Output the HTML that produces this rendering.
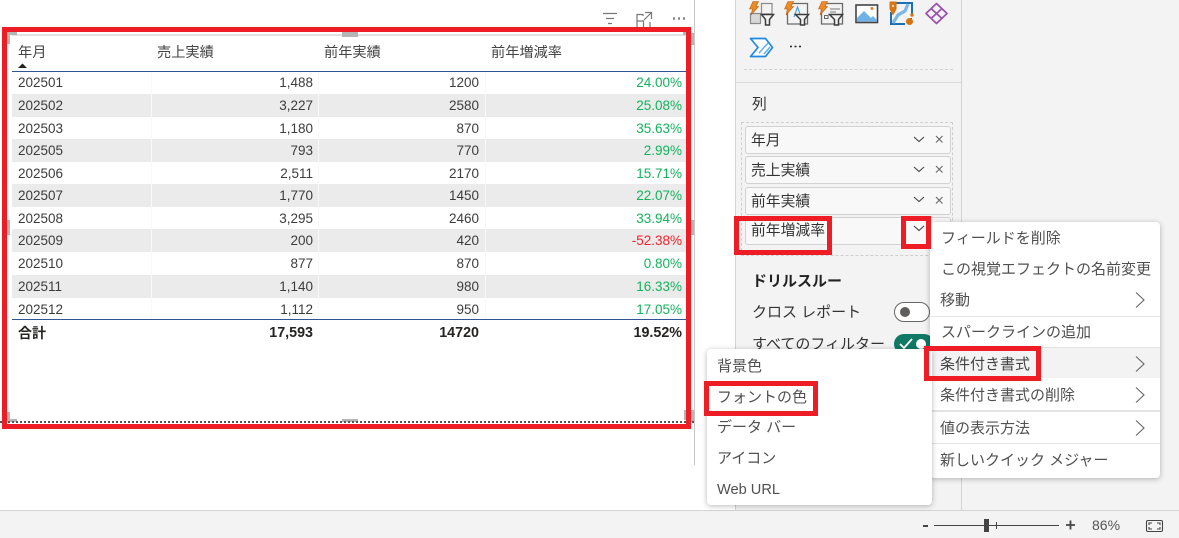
<!DOCTYPE html>
<html lang="ja">
<head>
<meta charset="utf-8">
<style>
html,body{margin:0;padding:0;background:#fff}
#p{position:relative;width:1179px;height:538px;overflow:hidden;background:#fff;font-family:"Liberation Sans","Noto Sans CJK JP",sans-serif;color:#333}
#p div,#p svg{position:absolute}
.t{white-space:nowrap;line-height:20px;height:20px}
.h{font-size:14.2px;color:#444;top:43px}
.d{font-size:13.5px;color:#3c3c3c}
.r{text-align:right;width:80px}
.g{color:#13b35c}
.b{font-weight:bold;color:#252423;font-size:14.3px}
.s{background:#ebebeb;left:12px;width:674px;height:23px}
.f{left:745px;width:204px;height:26px;border:1px solid #d2d2d2;border-radius:3px;background:#f8f8f8}
.fl{left:751px;font-size:14.8px;color:#333}
.m{font-size:15px;color:#505050}
.rb{border:5px solid #ee1c25;box-sizing:border-box}
.sep{left:930px;width:230px;height:1px;background:#e3e3e3}
</style>
</head>
<body>
<div id="p">
  <!-- backgrounds -->
  <div style="left:694px;top:0;width:1px;height:465px;background:#c8c8c8"></div>
  <div style="left:735px;top:0;width:444px;height:510px;background:#f3f3f3"></div>
  <div style="left:735px;top:0;width:1px;height:510px;background:#d4d4d4"></div>
  <div style="left:961px;top:0;width:1px;height:510px;background:#d4d4d4"></div>
  <div style="left:0;top:510px;width:1179px;height:28px;background:#f3f3f3;border-top:1px solid #d4d4d4;box-sizing:border-box"></div>

  <!-- visual toolbar -->
  <svg style="left:600px;top:8px" width="90" height="22" viewBox="0 0 90 22" fill="none" stroke="#777" stroke-width="1.2">
    <path d="M3 5.500H17M6 10.500H14M8 15.500H12"/>
    <path d="M43 8V6.500H37V20H50V14M45 4.500H51.500V11M51.500 4.500L44 12M37 13H43.500V20"/>
    <path d="M73 10.500h2M78 10.500h2M83 10.500h2" stroke-width="2.600" stroke="#888"/>
  </svg>

  <!-- table -->
  <div style="left:12px;top:34px;width:674px;height:2px;background:#e2e2e2"></div>
  <div class="s" style="top:94px"></div>
  <div class="s" style="top:139px"></div>
  <div class="s" style="top:184px"></div>
  <div class="s" style="top:229px"></div>
  <div class="s" style="top:275px"></div>
  <div style="left:151px;top:72px;width:1px;height:247px;background:#f8f8f8"></div>
  <div style="left:318px;top:72px;width:1px;height:247px;background:#f8f8f8"></div>
  <div style="left:485px;top:72px;width:1px;height:247px;background:#f8f8f8"></div>
  <div class="t h" style="left:18px">年月</div>
  <div class="t h" style="left:157px">売上実績</div>
  <div class="t h" style="left:324px">前年実績</div>
  <div class="t h" style="left:491px">前年増減率</div>
  <svg style="left:18px;top:62px" width="10" height="6"><path d="M0 6L4.500 1.500L9 6Z" fill="#222"/></svg>
  <div style="left:12px;top:71px;width:674px;height:1px;background:#2f5597"></div>
  <div style="left:12px;top:319px;width:674px;height:1px;background:#2f5597"></div>

  <div class="t d" style="left:18px;top:73px">202501</div><div class="t d r" style="left:233px;top:73px">1,488</div><div class="t d r" style="left:399px;top:73px">1200</div><div class="t d r g" style="left:602px;top:73px">24.00%</div>
  <div class="t d" style="left:18px;top:96px">202502</div><div class="t d r" style="left:233px;top:96px">3,227</div><div class="t d r" style="left:399px;top:96px">2580</div><div class="t d r g" style="left:602px;top:96px">25.08%</div>
  <div class="t d" style="left:18px;top:119px">202503</div><div class="t d r" style="left:233px;top:119px">1,180</div><div class="t d r" style="left:399px;top:119px">870</div><div class="t d r g" style="left:602px;top:119px">35.63%</div>
  <div class="t d" style="left:18px;top:141px">202505</div><div class="t d r" style="left:233px;top:141px">793</div><div class="t d r" style="left:399px;top:141px">770</div><div class="t d r g" style="left:602px;top:141px">2.99%</div>
  <div class="t d" style="left:18px;top:164px">202506</div><div class="t d r" style="left:233px;top:164px">2,511</div><div class="t d r" style="left:399px;top:164px">2170</div><div class="t d r g" style="left:602px;top:164px">15.71%</div>
  <div class="t d" style="left:18px;top:186px">202507</div><div class="t d r" style="left:233px;top:186px">1,770</div><div class="t d r" style="left:399px;top:186px">1450</div><div class="t d r g" style="left:602px;top:186px">22.07%</div>
  <div class="t d" style="left:18px;top:209px">202508</div><div class="t d r" style="left:233px;top:209px">3,295</div><div class="t d r" style="left:399px;top:209px">2460</div><div class="t d r g" style="left:602px;top:209px">33.94%</div>
  <div class="t d" style="left:18px;top:231px">202509</div><div class="t d r" style="left:233px;top:231px">200</div><div class="t d r" style="left:399px;top:231px">420</div><div class="t d r" style="left:602px;top:231px;color:#f5222d">-52.38%</div>
  <div class="t d" style="left:18px;top:254px">202510</div><div class="t d r" style="left:233px;top:254px">877</div><div class="t d r" style="left:399px;top:254px">870</div><div class="t d r g" style="left:602px;top:254px">0.80%</div>
  <div class="t d" style="left:18px;top:277px">202511</div><div class="t d r" style="left:233px;top:277px">1,140</div><div class="t d r" style="left:399px;top:277px">980</div><div class="t d r g" style="left:602px;top:277px">16.33%</div>
  <div class="t d" style="left:18px;top:300px">202512</div><div class="t d r" style="left:233px;top:300px">1,112</div><div class="t d r" style="left:399px;top:300px">950</div><div class="t d r g" style="left:602px;top:300px">17.05%</div>
  <div class="t b" style="left:18px;top:323px;font-size:14px">合計</div><div class="t b r" style="left:233px;top:323px">17,593</div><div class="t b r" style="left:399px;top:323px">14720</div><div class="t b r" style="left:602px;top:323px">19.52%</div>

  <!-- selection handles -->
  <div style="left:7px;top:32px;width:10px;height:3px;background:#b5b5b5"></div>
  <div style="left:7px;top:32px;width:3px;height:12px;background:#b5b5b5"></div>
  <div style="left:342px;top:32px;width:16px;height:5px;background:#b5b5b5"></div>
  <div style="left:683px;top:32px;width:3px;height:3px;background:#b5b5b5"></div>
  <div style="left:691px;top:33px;width:3px;height:12px;background:#b5b5b5"></div>
  <div style="left:7px;top:220px;width:3px;height:15px;background:#b5b5b5"></div>
  <div style="left:691px;top:220px;width:3px;height:15px;background:#b5b5b5"></div>
  <div style="left:7px;top:412px;width:3px;height:10px;background:#b5b5b5"></div>
  <div style="left:7px;top:419px;width:10px;height:3px;background:#b5b5b5"></div>
  <div style="left:342px;top:419px;width:16px;height:3px;background:#b5b5b5"></div>
  <div style="left:684px;top:410px;width:2px;height:10px;background:#b5b5b5"></div>
  <div style="left:691px;top:410px;width:3px;height:12px;background:#b5b5b5"></div>
  <div style="left:0;top:421px;width:694px;height:0;border-top:2px dotted #555"></div>

  <!-- red frame -->
  <div class="rb" style="left:2px;top:27px;width:689px;height:402px"></div>

  <!-- panel icons -->
  <svg style="left:740px;top:0" width="220" height="64" viewBox="0 0 220 64" fill="none">
    <!-- icon 1 -->
    <path d="M21.500 3.500H32V14H21.500Z" stroke="#8a8a8a" stroke-width="1.200"/>
    <path d="M10.500 13.500H20.500V23.500H10.500Z" fill="#d8d8d8" stroke="#8a8a8a" stroke-width="1.200"/>
    <path d="M21.500 14.500H33.500L29.500 19.500V25H25.500V19.500Z" fill="#f3f3f3" stroke="#3c3c3c" stroke-width="1.500"/>
    <path d="M13 1.500H18.500L16 6.500H18.500L11 15L12.500 9H9.500Z" fill="#f08a24" stroke="#b85f10" stroke-width=".6"/>
    <!-- icon 2 -->
    <path d="M47.500 3.500H67.500V24H47.500Z" stroke="#6a6a6a" stroke-width="1.300"/>
    <path d="M54 17L57.500 7L61 17" stroke="#3a96dd" stroke-width="1.100"/>
    <path d="M55.500 14.500H68.500L64.500 19.500V25H60.500V19.500Z" fill="#f3f3f3" stroke="#3c3c3c" stroke-width="1.500"/>
    <path d="M48 1.500H53.500L51 6.500H53.500L46 15L47.500 9H44.500Z" fill="#f08a24" stroke="#b85f10" stroke-width=".6"/>
    <!-- icon 3 -->
    <path d="M81.500 3.500H102.500V24H81.500Z" stroke="#6a6a6a" stroke-width="1.300"/>
    <path d="M90 9H100M90 12H96" stroke="#777"/>
    <rect x="84.500" y="15.500" width="3.500" height="3" stroke="#666"/>
    <path d="M89.500 14.500H102.500L98.500 19.500V25H94.500V19.500Z" fill="#f3f3f3" stroke="#3c3c3c" stroke-width="1.500"/>
    <path d="M82 1.500H87.500L85 6.500H87.500L80 15L81.500 9H78.500Z" fill="#f08a24" stroke="#b85f10" stroke-width=".6"/>
    <!-- image -->
    <rect x="116" y="5" width="21.500" height="17.500" fill="#fff" stroke="#444" stroke-width="1.600"/>
    <path d="M117 21.500V18L124 11L131 18L133 16L136.500 19.500V21.500Z" fill="#6db2e8"/>
    <circle cx="132" cy="8.500" r="1.500" fill="#e97c1f"/>
    <!-- map -->
    <path d="M156 3H172V15M171 18V22M165 24H151V12" stroke="#1c6fb5" stroke-width="2"/>
    <path d="M153 23L158 15L165 11L168 4" stroke="#77b6e8" stroke-width="3.200"/>
    <path d="M150 2H156V9L153 14.500L150 9Z" fill="#d8730f" stroke="#d8730f" stroke-width="1"/>
    <circle cx="153" cy="6" r="1.200" fill="#f7d9b8"/>
    <circle cx="169.500" cy="21.500" r="3.500" fill="#d8730f"/>
    <circle cx="172" cy="15" r="1.700" fill="#d8730f"/>
    <!-- diamond -->
    <path d="M196.500 3.500L207 13.500L196.500 23.500L186 13.500ZM191 8.500L202 18.500M202 8.500L191 18.500" stroke="#9b4fb0" stroke-width="1.700" stroke-linejoin="round"/>
    <!-- automate -->
    <path d="M10.500 38.500H25.500L32.500 47.500L25.500 56.500H10.500L18 47.500Z" fill="#fff" stroke="#1e88e5" stroke-width="1.700" stroke-linejoin="round"/>
    <path d="M19 53L28 43M24 54L30 47" stroke="#5aaef0" stroke-width="1.400"/>
    <!-- more -->
    <path d="M50 46.500h2M54.500 46.500h2M59 46.500h2" stroke="#222" stroke-width="1.600"/>
  </svg>
  <div style="left:744px;top:69px;width:209px;height:0;border-top:1px dashed #d4d4d4"></div>
  <div style="left:736px;top:82px;width:225px;height:1px;background:#dcdcdc"></div>
  <div class="t fl" style="left:752px;top:95px">列</div>

  <!-- fields -->
  <div style="left:741px;top:122px;width:212px;height:134px;border:1px dashed #cfcfcf;box-sizing:border-box"></div>
  <div class="f" style="top:126px"></div>
  <div class="f" style="top:156px"></div>
  <div class="f" style="top:187px"></div>
  <div class="f" style="top:217px"></div>
  <div class="t fl" style="top:131px">年月</div>
  <div class="t fl" style="top:161px">売上実績</div>
  <div class="t fl" style="top:192px">前年実績</div>
  <div class="t fl" style="top:221px">前年増減率</div>
  <svg style="left:910px;top:130px" width="40" height="115" fill="none" stroke="#444" stroke-width="1.100">
    <path d="M4 7L9 11.500L14 7M4 37L9 41.500L14 37M4 67L9 71.500L14 67M4 96L9 100.500L14 96"/>
    <path d="M26 6L32.500 12.500M32.500 6L26 12.500M26 36L32.500 42.500M32.500 36L26 42.500M26 67L32.500 73.500M32.500 67L26 73.500" stroke="#666"/>
  </svg>

  <div class="t" style="left:752px;top:272px;font-size:15px;font-weight:bold;color:#222">ドリルスルー</div>
  <div class="t" style="left:752px;top:303px;font-size:15px;color:#333">クロス レポート</div>
  <div class="t" style="left:752px;top:335px;font-size:15px;color:#333">すべてのフィルター</div>
  <div style="left:894px;top:302px;width:36px;height:20px;border:1px solid #666;border-radius:10px;box-sizing:border-box;background:#fff"></div>
  <div style="left:900px;top:307px;width:10px;height:10px;border-radius:50%;background:#605e5c"></div>
  <div style="left:894px;top:334px;width:40px;height:20px;border-radius:10px;background:#117865"></div>
  <svg style="left:898px;top:337px" width="32" height="14" fill="none"><path d="M2 7L6 11L14 2" stroke="#fff" stroke-width="1.800"/><circle cx="23" cy="7" r="5" fill="#fff"/></svg>

  <!-- context menu -->
  <div style="left:930px;top:222px;width:230px;height:256px;background:#fff;border-radius:4px;box-shadow:0 1px 6px rgba(0,0,0,.28)"></div>
  <div style="left:930px;top:347px;width:230px;height:31px;background:#f3f3f3"></div>
  <div class="sep" style="top:316px"></div>
  <div class="sep" style="top:347px"></div>
  <div class="sep" style="top:410px;height:2px"></div>
  <div class="sep" style="top:443px"></div>
  <div class="t m" style="left:941px;top:229px">フィールドを削除</div>
  <div class="t m" style="left:941px;top:260px">この視覚エフェクトの名前変更</div>
  <div class="t m" style="left:940px;top:291px">移動</div>
  <div class="t m" style="left:941px;top:323px">スパークラインの追加</div>
  <div class="t m" style="left:940px;top:355px;color:#444">条件付き書式</div>
  <div class="t m" style="left:940px;top:386px">条件付き書式の削除</div>
  <div class="t m" style="left:940px;top:419px">値の表示方法</div>
  <div class="t m" style="left:940px;top:451px">新しいクイック メジャー</div>
  <svg style="left:1134px;top:290px" width="14" height="150" fill="none" stroke="#666" stroke-width="1.100">
    <path d="M2 2.500L10 10L2 17.500M2 66.500L10 74L2 81.500M2 97.500L10 105L2 112.500M2 130.500L10 138L2 145.500"/>
  </svg>

  <!-- submenu -->
  <div style="left:707px;top:349px;width:225px;height:156px;background:#fff;border-radius:4px;box-shadow:0 1px 6px rgba(0,0,0,.28)"></div>
  <div class="t m" style="left:717px;top:357px">背景色</div>
  <div class="t m" style="left:717px;top:388px">フォントの色</div>
  <div class="t m" style="left:717px;top:418px">データ バー</div>
  <div class="t m" style="left:717px;top:449px">アイコン</div>
  <div class="t m" style="left:717px;top:480px;font-size:14.6px">Web URL</div>

  <!-- red highlights -->
  <div class="rb" style="left:734px;top:216px;width:98px;height:39px"></div>
  <div class="rb" style="left:901px;top:216px;width:30px;height:33px"></div>
  <div class="rb" style="left:924px;top:346px;width:117px;height:35px"></div>
  <div class="rb" style="left:704px;top:381px;width:114px;height:35px"></div>

  <!-- zoom bar -->
  <div style="left:923px;top:525px;width:5px;height:2px;background:#444"></div>
  <div style="left:934px;top:525px;width:125px;height:1px;background:#444"></div>
  <div style="left:984px;top:519px;width:5px;height:13px;background:#444"></div>
  <div style="left:996px;top:522px;width:1px;height:7px;background:#444"></div>
  <svg style="left:1065px;top:519px" width="12" height="12"><path d="M1 6H10M5.500 1.500V10.500" stroke="#444" stroke-width="1.800"/></svg>
  <div class="t" style="left:1092px;top:515px;font-size:14px;color:#555">86%</div>
  <svg style="left:1145px;top:519px" width="20" height="14" fill="none" stroke="#444" stroke-width="1.100">
    <rect x="1.500" y="1.500" width="16" height="11" rx="1.500"/>
    <path d="M4 6V4H7M12 4H15V6M4 8V10H7M12 10H15V8"/>
  </svg>
</div>
</body>
</html>
